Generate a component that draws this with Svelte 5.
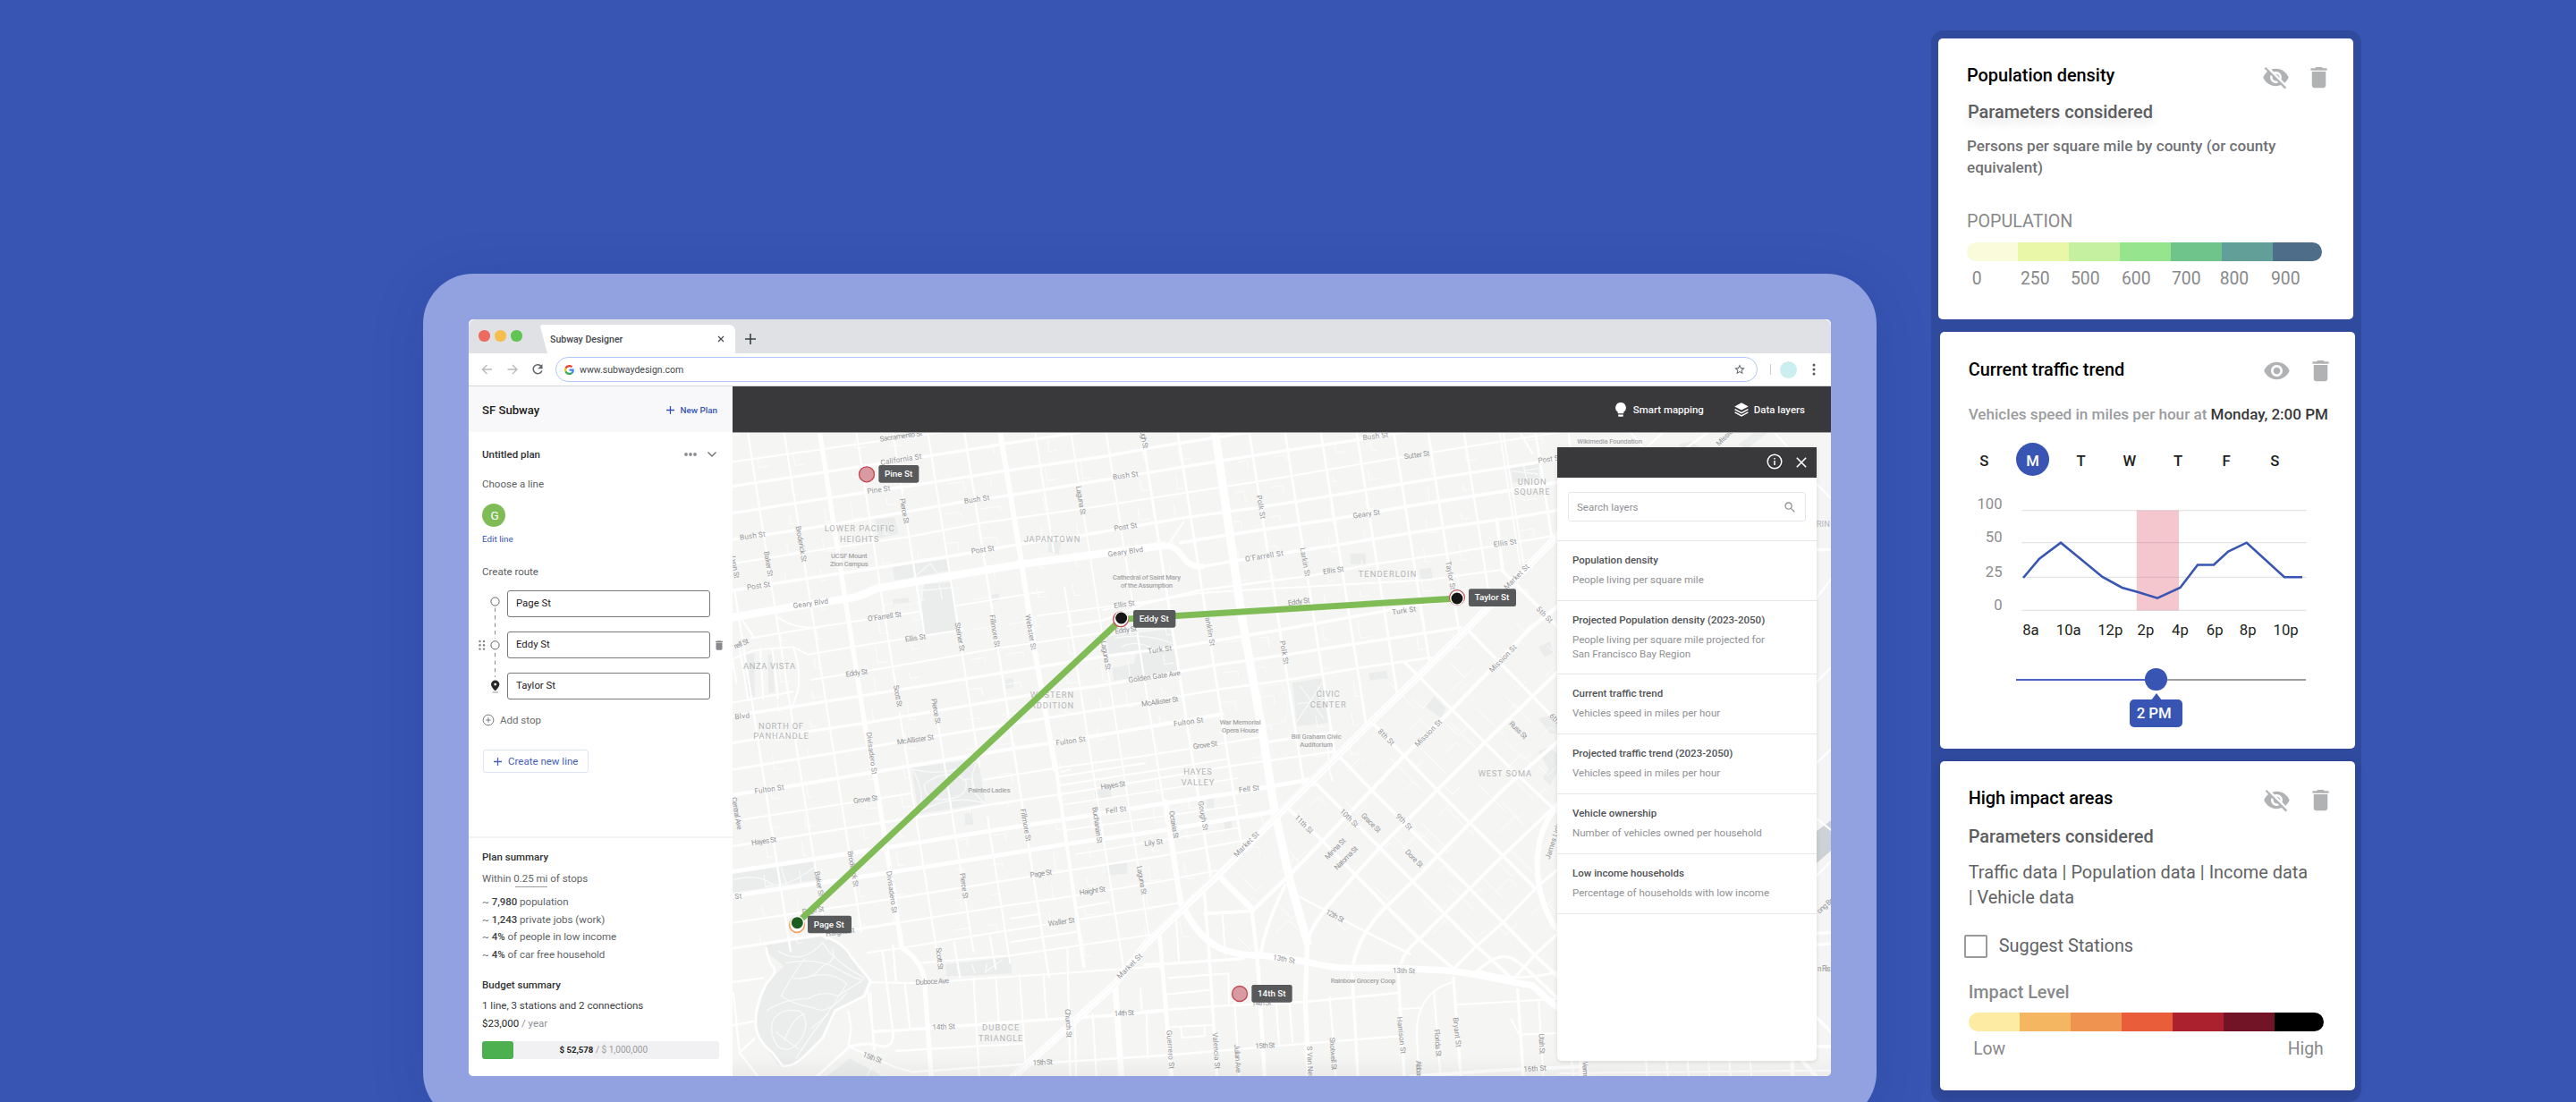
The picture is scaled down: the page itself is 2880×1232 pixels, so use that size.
<script>
  const stops = ['Page St', 'Eddy St', 'Taylor St'];

  const facts = [
    ['7,980', 'population'],
    ['1,243', 'private jobs (work)'],
    ['4%', 'of people in low income'],
    ['4%', 'of car free household'],
  ];

  const layers = [
    ['Population density', 'People living per square mile'],
    ['Projected Population density (2023-2050)', 'People living per square mile projected for San Francisco Bay Region'],
    ['Current traffic trend', 'Vehicles speed in miles per hour'],
    ['Projected traffic trend (2023-2050)', 'Vehicles speed in miles per hour'],
    ['Vehicle ownership', 'Number of vehicles owned per household'],
    ['Low income households', 'Percentage of households with low income'],
  ];

  const density = ['#fafbdb', '#e8f8a8', '#c4f09f', '#97e48e', '#6fc48b', '#629f98', '#4d6d88'];
  const densityLabels = ['0', '250', '500', '600', '700', '800', '900'];
  const impact = ['#feeba3', '#f4b661', '#ef9350', '#e95d3b', '#ab212d', '#731426', '#000000'];
  const days = ['S', 'M', 'T', 'W', 'T', 'F', 'S'];

  const yTicks = [['100', 563, 570.7], ['50', 600.3, 606.7], ['25', 639, 645.3], ['0', 676, 682.3]];
  const xTicks = [['8a', 2260.7], ['10a', 2298.3], ['12p', 2344.7], ['2p', 2389], ['4p', 2427.5], ['6p', 2466.3], ['8p', 2503.3], ['10p', 2541]];

  // Street network north-west of Market St: [stroke width, path]
  const grid = [
    [6, 'M-10 260L640 168L760 150'],
    [10, 'M-10 342L310 293L700 232L900 200L1160 160'],
    [10, 'M-10 432L320 380L620 335L925 287L1250 240L1440 205L1730 160'],
    [10, 'M-10 521L330 470L760 395L935 370L1270 315L1730 240L2080 187L2300 150'],
    [6, 'M-10 601L330 548L590 510L820 466L1180 415L1760 325L2230 245L2580 190L2820 152'],
    [10, 'M-10 692L130 668L480 615L760 570L960 535L1170 505L1520 445L1760 412L2020 370L2380 310L2820 242'],
    [26, 'M-10 782L200 745L400 715Q440 705 480 683L960 603L1440 540'],
    [11, 'M1500 530L1650 505L2020 450L2250 410L2600 355L2820 318'],
    [20, 'M1430 541C1520 530 1490 612 1570 610'],
    [10, 'M1570 610L1780 575L2010 540L2380 480L2620 445L2820 412'],
    [6, 'M60 850L240 820L400 795L630 760L640 835'],
    [6, 'M-10 925Q60 885 130 885L200 880L250 905L460 870L620 845L770 822'],
    [5, 'M745 742L1000 700L1040 695'],
    [6, 'M150 780Q200 820 290 815'],
    [6, 'M30 790L70 850'],
    [6, 'M260 990L540 945L880 885L1040 862L1240 832'],
    [7, 'M1120 810L1240 790L1380 735L1560 690L1940 640L2160 600L2410 565L2760 505'],
    [6, 'M1240 755L1560 700L1700 690L2330 655L2580 620'],
    [5, 'M1020 775L1440 720'],
    [10, 'M-10 1112L200 1080L420 1045L640 1010L880 970L1250 910L1490 880L1820 825L2180 760L2420 715'],
    [10, 'M-10 1202L440 1135L1000 1040L1230 1010L1620 940L1860 905L2080 870L2440 815'],
    [6, 'M-10 1068L200 1030'],
    [8, 'M-10 1292L340 1235L550 1200L980 1130L1380 1065L1640 1020L1860 990L2100 950L2340 915'],
    [12, 'M-10 1377L230 1340L600 1278L940 1220L1080 1200L1380 1150L1640 1105'],
    [6, 'M-10 1465L600 1370M840 1325L1090 1285L1380 1245L1660 1200L1780 1180'],
    [6, 'M1090 1315L1380 1270M1090 1345L1660 1255'],
    [9, 'M1780 1200L2020 1165'],
    [7, 'M-10 1549L490 1470L720 1435L850 1410L1090 1375L1440 1318L1660 1280L2020 1230'],
    [5, 'M1100 1410L1690 1320M1110 1495L1700 1410M1150 1575L1700 1485'],
    [14, 'M-10 1634L500 1555L870 1495L1100 1460L1440 1405L1680 1370L1930 1325'],
    [14, 'M-10 1716L300 1670L500 1640L880 1580L1120 1540L1440 1495L1810 1432'],
    [7, 'M-10 1806L420 1742L780 1685L1120 1630L1440 1580L1730 1525'],
    [9, 'M-10 1892L540 1807'],
    [6, 'M540 1807L900 1750L1140 1715L1440 1665L1640 1625'],
    [6, 'M450 1905L560 1890L800 1850L1150 1795L1500 1738'],
    [6, 'M620 1940L930 1915L1400 1845M930 1790L1030 1775M930 1870L1150 1835M1150 1755L1260 1735'],
  ];

  // North-south streets share one bearing: [x at the top edge, start y, end y, stroke width]
  const avenues = [
    [-78, 690, 1900, 7], [48, 150, 1860, 6], [170, 150, 1835, 6], [412, 150, 1010, 6], [412, 1100, 1950, 6],
    [535, 150, 780, 6], [535, 1080, 1900, 6], [652, 150, 1280, 6], [652, 1450, 1940, 6], [775, 150, 1990, 7],
    [1012, 150, 560, 6], [1030, 680, 1960, 6], [1132, 150, 1900, 5], [1250, 150, 1850, 6], [1370, 150, 1830, 9],
    [1490, 150, 1640, 8], [1730, 150, 1340, 8], [1850, 150, 1310, 8], [1970, 150, 1180, 8], [2090, 150, 1130, 8],
    [2215, 150, 960, 8], [2330, 150, 860, 8], [2450, 150, 700, 7], [2570, 150, 600, 5], [2582, 150, 600, 5], [2690, 150, 560, 8],
  ].map(([x, a, b, w]) => [w, `M${x + (a - 160) * 0.155} ${a}L${x + (b - 160) * 0.155} ${b}`]);

  const arterials = [
    [16, 'M288 150L375 720L450 1200L480 1340L565 1890Q625 1925 640 1990L664 2330'],
    [18, 'M893 150L965 590L1012 900L1080 1290'],
    [12, 'M1080 1270L1140 1700L1175 1950'],
    [28, 'M1614 150L1705 780L1775 1170L1815 1430L1868 1670L1925 1870'],
    [16, 'M1925 1850L1918 2070L1930 2330'],
    [18, 'M1450 1400L1500 1740'],
    [24, 'M2770 500L2460 820L2140 1130L1940 1330L1620 1650L1380 1880L1280 2010L930 2330'],
    [22, 'M1505 1745C1570 1880 1640 1915 1780 1915L1920 1935C2020 1962 2080 1958 2180 1955L2390 1965C2500 1975 2600 2005 2680 2015L2740 2070L2840 2140'],
    [10, 'M2490 1970C2570 1900 2600 1905 2660 1960L2820 2110'],
    [8, 'M2500 1965C2620 2010 2740 1980 2830 1950'],
    [18, 'M2770 1410C2680 1490 2670 1680 2750 1810L2820 1900'],
    [13, 'M2830 690L2670 820L2410 1090L2250 1245L2140 1360L1870 1640L1740 1765'],
    [12, 'M2830 900L2520 1200L2360 1360L2170 1550L2000 1740Q1930 1830 1925 1870'],
    [12, 'M2830 1140L2590 1350L2470 1470L2280 1665L2190 1750Q2100 1840 2080 1940'],
    [11, 'M2770 1400L2580 1580L2385 1775L2300 1860Q2250 1900 2240 1940'],
    [10, 'M2830 1570L2690 1690L2580 1805L2490 1885L2420 1955'],
    [10, 'M2830 1780L2690 1910L2620 1990'],
    [11, 'M2560 450L2580 625L2680 725L2830 880'],
    [11, 'M2460 820L2680 1045L2830 1200'],
    [10, 'M2250 930L2410 1090L2530 1210L2620 1300L2770 1440'],
    [11, 'M2140 1130L2250 1245L2360 1360L2470 1470L2580 1580L2690 1690'],
    [11, 'M2030 1245L2140 1360L2360 1580L2470 1690L2690 1915L2770 1990'],
    [11, 'M1950 1335L2170 1555L2385 1775L2495 1885L2630 2010'],
    [11, 'M1865 1425L1970 1525L2190 1750L2300 1860L2410 1955'],
    [7, 'M1895 1715L2120 1835L2270 1910'],
    [20, 'M1630 1650L1740 1760'],
    [11, 'M1580 1775L1740 1765'],
    [13, 'M1738 1760L1755 1900L1762 1990L1782 2330'],
    [11, 'M1850 1680Q1790 1800 1770 1900'],
    [10, 'M1380 1945L1460 1942L1710 1925'],
    [14, 'M1430 1850L1470 2330'],
    [10, 'M1580 1710L1597 1930L1622 2330'],
    [20, 'M1280 2010L1302 2330'],
    [6, 'M460 2005L640 2008L830 1992L1100 1975L1300 1960L1440 1950'],
    [10, 'M470 2170L640 2160L970 2135L1280 2115L1440 2100'],
    [8, 'M1380 2102L1610 2085L1920 2070L2230 2040'],
    [6, 'M2230 2095L2300 2090M2420 2080L2770 2060'],
    [7, 'M545 2235L970 2210M600 2305L970 2280L1440 2250L1920 2210L2230 2185'],
    [6, 'M1460 1990L1660 1975L1662 2080M1450 2045L1600 2030M1465 2155L1605 2148M1500 2155L1505 2190L1580 2185L1580 2150'],
    [11, 'M2270 2320L2560 2300L2830 2288'],
    [7, 'M535 1880L545 2000M500 1900L535 2170M450 2030L475 2230M575 2010L592 2160'],
    [6, 'M805 1990L825 2330M880 1985L890 2140M960 1980L980 2280M1040 1975L1050 2130M740 1870L760 1990M860 1850L880 1960'],
    [6, 'M1120 1890L1130 2330M1145 2130L1150 2330M1205 2110L1218 2330M1365 2025L1370 2100M1385 2110L1390 2260'],
    [6, 'M1680 2050L1697 2330M1820 2070L1830 2210M1865 2070L1875 2205M2000 2055L2022 2330M2350 2040L2372 2330M2700 2060L2718 2330M1485 1790L1495 1940M1640 1780L1650 1910'],
    [10, 'M2075 1975L2095 2330M2230 1975L2250 2330M2415 1990L2440 2330M2630 2030L2650 2330'],
    [6, 'M2410 2005Q2290 2040 2292 2180L2300 2330'],
    [6, 'M2610 2130L2635 2180L2760 2175'],
    [9, 'M280 2320L390 2220Q450 2205 480 2215Q540 2235 535 2170'],
    [6, 'M390 2222L545 2290L600 2305'],
    [7, 'M100 1990L-10 2005M0 2040L20 2240L90 2330M-10 2150L70 2135M20 2240L70 2195'],
    [8, 'M110 1890C120 1980 170 1940 110 2010Q70 2080 75 2150Q80 2200 130 2240L165 2285Q200 2290 240 2250L300 2190L340 2100L440 2050L460 2000L395 1920Q370 1870 300 1850'],
    [6, 'M385 2100L395 2160L385 2220M460 2040L470 2230'],
    [7, 'M3600 300L3690 390M3600 1030L3690 940M3600 760L3690 640M3600 1300L3690 1215M3600 1430L3690 1500M3600 1680L3690 1590'],
    [10, 'M3600 1840L3690 1838M3600 1880L3690 1875M3600 2090L3690 2180M3600 2220L3690 2220M3600 555L3690 553'],
    [6, 'M2640 165L2680 230M2800 150L2810 240M3040 230L3130 150M3170 230L3270 160M3490 160L3620 300M3000 150L3060 220'],
    [6, 'M2770 2310L3690 2300M2810 2260L2820 2330M2860 2260L2865 2330M3060 2265L3065 2330M3130 2265L3135 2330M3200 2265L3205 2330M3270 2265L3275 2330M3340 2265L3345 2330M3410 2265L3415 2330'],
    [14, 'M3550 2250L3552 2330M3570 2250L3640 2330M2840 2250L2845 2330'],
    [6, 'M20 880L50 1060M90 885L100 1055M130 885L150 1050M200 880Q230 960 215 1030L195 1090M-10 880L10 1000'],
    [5, 'M1450 550L1510 460'],
    [5, 'M1100 1300L1130 1290M1990 1170L2000 1300L2010 1330M1780 1350L1930 1325'],
  ];

  const parks = [
    'M110 1880L300 1850Q370 1870 395 1920L455 2000L430 2050L340 2100L300 2190L240 2250L200 2285L150 2280L90 2200L75 2130L110 2010L170 1950L120 1910Z',
    'M598 1285L820 1255L845 1405L620 1440Z',
    'M-10 1642L270 1600L285 1660L-10 1705Z',
    'M640 670L735 662L750 825L640 838L632 740Z',
    'M535 612L715 585L720 625L540 657Z',
    'M1250 845L1478 818L1490 965L1275 992L1270 950L1345 935L1350 895L1260 905Z',
    'M475 452L540 445L555 500L485 515Z',
    'M1058 520L1100 528L1090 570L1055 560Z',
    'M1875 1000L1975 985L1995 1135L1890 1145Z',
    'M710 1945L930 1920L935 1975L715 1985Z',
    'M300 2330L390 2260L520 2330Z',
    'M2605 275L2700 265L2710 310L2615 330Z',
    'M2320 1080L2350 1045L2390 1085L2375 1120Z',
    'M2700 880L2740 860L2750 900L2720 915Z',
    'M2700 1120L2760 1105L2765 1170L2740 1170Z',
    'M2700 1230L2735 1215L2765 1240L2762 1300L2740 1345L2715 1320L2735 1290Z',
    'M40 905L70 900L72 1045L50 1045ZM115 905L130 905L138 1030L118 1035Z',
    'M1250 1610L1320 1605L1322 1640L1255 1645Z',
    'M1210 1360L1265 1350L1268 1385L1212 1390Z',
    'M2130 968L2190 960L2195 985L2135 992ZM2067 568L2120 565L2122 600L2070 603Z',
    'M2300 620L2340 615L2345 650L2305 655Z',
    'M535 720L588 715L590 730L537 735ZM865 705L892 700L890 725L865 730Z',
    'M1585 1385L1610 1382L1612 1420L1588 1422ZM1645 1465L1670 1460L1672 1490L1648 1492Z',
    'M775 1440L800 1435L805 1475L778 1478ZM910 990L938 985L940 1015L915 1020Z',
    'M3170 200L3210 190L3240 210L3180 215ZM3370 200L3440 150L3470 160L3400 215Z',
  ];

  const trails = [
    'M150 1900Q230 1950 300 1870Q330 1930 440 1990',
    'M175 1940Q280 1920 350 1960T440 1995',
    'M240 1925Q210 1960 160 2050Q200 2080 270 2090Q310 2120 380 2040',
    'M240 1990Q330 1960 380 2010Q330 2090 300 2130Q260 2180 210 2260',
    'M130 2140Q150 2090 220 2100Q260 2130 230 2190Q190 2250 150 2220Q120 2180 130 2140Z',
    'M110 2100Q170 2060 250 2060Q300 2030 350 2050L430 2000',
    'M200 1990Q260 2000 300 1950Q350 1930 330 1890',
    'M170 2200Q200 2120 240 2110M140 2170L220 2230M260 2160L320 2110',
    'M600 1290Q720 1320 820 1260M600 1290Q650 1380 620 1435M820 1260Q770 1350 845 1405M620 1435Q730 1370 845 1405M640 1340Q720 1280 780 1330Q790 1380 720 1390Q640 1400 640 1340Z',
    'M0 1660Q80 1640 120 1670T270 1620M160 1620L180 1680',
    'M590 740L640 720M600 650L660 600L690 640M640 690L740 680M690 670L700 720',
    'M1280 850Q1380 830 1478 870M1300 880Q1360 850 1420 895',
    'M1900 1010L1980 1120M1975 1000L1890 1130M1890 1070L1985 1060',
    'M750 1950L760 1980M800 1945L810 1975M850 1940L845 1970L900 1930',
    'M1770 1010L1840 1005Q1870 1060 1850 1130L1785 1145Q1765 1080 1770 1010Z',
    'M2610 290L2700 300M2650 270L2660 320',
    'M440 2330L470 2280L500 2320',
  ];

  // Small service lanes scattered through the blocks
  const lanes = Array.from({ length: 300 }, (_, i) => {
    const x = (i * 617) % 2780;
    const y = 170 + ((i * 389) % 1700);
    const south = x + y > 3320;
    const l = 22 + ((i * 13) % 40);
    const k = 12 + ((i * 7) % 26);
    if (south) return `M${x} ${y}l${l} ${l * (i % 2 ? 1 : -1)}l${k} ${k * (i % 2 ? -1 : 1)}`;
    return i % 3 ? `M${x} ${y}l${l * 0.15} ${l}l${k} ${-k * 0.15}` : `M${x} ${y}l${l} ${-l * 0.15}l${k * 0.15} ${k}`;
  }).join('');

  const diagonals = Array.from({ length: 16 }, (_, i) => {
    const x = 2200 + ((i * 97) % 480);
    const y = 1000 + ((i * 211) % 800);
    return `M${x} ${y}l90 90`;
  }).join('');

  // [text, centre x, centre y, rotation, drawn length]
  const streets = [
    ['Sacramento St', 562, 172, -8, 144], ['California St', 562, 250, -9, 138], ['Pine St', 487, 352, -8, 78],
    ['Bush St', 64, 506, -8, 86], ['Bush St', 816, 384, -8, 86], ['Bush St', 1315, 304, -8, 86], ['Bush St', 2153, 172, -8, 86],
    ['Post St', 84, 674, -8, 78], ['Post St', 836, 553, -8, 78], ['Post St', 1315, 476, -8, 78], ['Post St', 2737, 249, -8, 78],
    ['Sutter St', 2292, 235, -8, 86], ['Geary St', 2123, 433, -8, 92], ['Geary Blvd', 259, 733, -8, 119], ['Geary Blvd', 1315, 560, -8, 119],
    ["O'Farrell St", 507, 777, -8, 114], ["O'Farrell St", 1780, 574, -9, 129], ['Ellis St', 610, 849, -8, 70], ['Ellis St', 1311, 736, -8, 70],
    ['Ellis St', 2012, 622, -8, 70], ['Ellis St', 2588, 530, -8, 78], ['Eddy St', 413, 966, -8, 74], ['Eddy St', 1316, 822, -8, 74],
    ['Eddy St', 1896, 727, -8, 74], ['Turk St', 2249, 757, -8, 81], ['Turk St', 1430, 888, -8, 81], ['Golden Gate Ave', 1412, 978, -8, 176],
    ['McAllister St', 1430, 1062, -8, 125], ['McAllister St', 610, 1190, -8, 125], ['rell St', 26, 868, -24, 52], ['Blvd', 29, 1111, -6, 50],
    ['Fulton St', 120, 1356, -8, 100], ['Fulton St', 1131, 1194, -8, 100], ['Fulton St', 1526, 1130, -8, 100], ['Grove St', 443, 1390, -8, 82],
    ['Grove St', 1582, 1208, -8, 82], ['Hayes St', 102, 1530, -8, 84], ['Hayes St', 1273, 1343, -8, 84], ['Fell St', 1283, 1426, -7, 70],
    ['Fell St', 1729, 1355, -7, 70], ['Lily St', 1409, 1535, -8, 62], ['Page St', 1031, 1639, -8, 74], ['Page St', 267, 1762, -8, 74],
    ['Haight St', 1204, 1697, -8, 88], ['Haight St', 358, 1835, -8, 98], ['Waller St', 1100, 1801, -8, 90], ['St', 16, 1715, -4, 24],
    ['Duboce Ave', 667, 2001, -3, 112], ['14th St', 705, 2153, -3, 76], ['14th St', 1310, 2107, -3, 66], ['14th St', 1771, 2073, -3, 66],
    ['15th St', 466, 2256, 20, 66], ['15th St', 1037, 2272, -3, 66], ['15th St', 1783, 2216, -3, 66], ['16th St', 2688, 2293, -3, 76],
    ['13th St', 1847, 1926, 10, 75], ['13th St', 2249, 1965, 1, 75], ['12th St', 2018, 1781, 28, 66],
    ['Market St', 2626, 644, -45, 108], ['Market St', 1720, 1541, -45, 108], ['Market St', 1328, 1950, -45, 108],
    ['Mission St', 2580, 918, -45, 118], ['Mission St', 2330, 1168, -45, 118], ['Minna St', 2018, 1556, -45, 88], ['Natoma St', 2054, 1587, -45, 100],
    ['5th St', 2721, 771, 45, 66], ['6th St', 2765, 1130, 45, 66], ['8th St', 2190, 1182, 45, 66], ['9th St', 2250, 1466, 45, 66], ['10th St', 2066, 1453, 45, 76],
    ['11th St', 1914, 1474, 45, 76], ['Grace St', 2139, 1469, 45, 82], ['Dore St', 2284, 1589, 45, 74], ['Russ St', 2633, 1158, 45, 74],
    ['Broderick St', 228, 534, 80, 122], ['Baker St', 118, 601, 80, 86], ['Lyon St', 6, 612, 80, 76], ['Pierce St', 574, 424, 80, 86],
    ['Pierce St', 680, 1095, 80, 86], ['Scott St', 552, 1044, 80, 74], ['Steiner St', 760, 846, 80, 98], ['Fillmore St', 877, 826, 80, 110],
    ['Webster St', 998, 830, 80, 120], ['Laguna St', 1166, 388, 80, 98], ['Laguna St', 1250, 908, 80, 98], ['Gough St', 1376, 172, 80, 86],
    ['Divisadero St', 464, 1236, 82, 142], ['Divisadero St', 532, 1702, 82, 142], ['Baker St', 288, 1674, 80, 86], ['Broderick St', 402, 1624, 80, 122],
    ['Pierce St', 774, 1681, 82, 86], ['Fillmore St', 981, 1477, 80, 110], ['Buchanan St', 1221, 1477, 82, 122], ['Laguna St', 1370, 1662, 80, 98],
    ['Central Ave', 12, 1438, 80, 110], ['Scott St', 692, 1925, 84, 74], ['Church St', 1124, 2142, 87, 96], ['Polk St', 1770, 410, 80, 80],
    ['Polk St', 1848, 898, 80, 80], ['Larkin St', 1918, 595, 80, 98], ['Taylor St', 2406, 640, 80, 96], ['Franklin St', 1597, 817, 80, 120],
    ['Octavia St', 1478, 1476, 80, 94], ['Gough St', 1576, 1446, 80, 100], ['Guerrero St', 1466, 2230, 86, 130], ['Valencia St', 1620, 2234, 86, 122],
    ['Julian Ave', 1692, 2260, 86, 96], ['S Van Ness', 1935, 2280, 88, 122], ['Shotwell St', 2012, 2244, 86, 110], ['Harrison St', 2241, 2182, 84, 124],
    ['Florida St', 2363, 2208, 86, 92], ['Bryant St', 2428, 2172, 84, 100], ['Alabama', 2300, 2306, 88, 76], ['Utah St', 2712, 2211, 88, 68],
    ['James Lick', 2748, 1532, -72, 122], ['Vermont', 2858, 2310, 88, 80], ['Mission', 3328, 172, -45, 80], ['ong Br', 3660, 1748, -42, 62], ['n Ris', 3658, 1960, 0, 44],
  ];

  const places = [
    ['UCSF Mount', 388, 574, 122], ['Zion Campus', 388, 601, 128], ['Cathedral of Saint Mary', 1386, 645, 228], ['of the Assumption', 1386, 673, 174],
    ['War Memorial', 1700, 1133, 138], ['Opera House', 1700, 1160, 124], ['Bill Graham Civic', 1955, 1180, 168], ['Auditorium', 1955, 1208, 110],
    ['Painted Ladies', 858, 1360, 142], ['Rainbow Grocery Coop', 2112, 2000, 218], ['Wikimedia Foundation', 2939, 190, 218],
  ];

  const districts = [
    ['LOWER PACIFIC', 422, 482, 234], ['HEIGHTS', 422, 517, 130], ['JAPANTOWN', 1068, 517, 188], ['ANZA VISTA', 120, 943, 174],
    ['NORTH OF', 159, 1144, 150], ['PANHANDLE', 159, 1179, 185], ['WESTERN', 1068, 1041, 145], ['ADDITION', 1068, 1076, 145],
    ['TENDERLOIN', 2193, 636, 194], ['UNION', 2678, 326, 96], ['SQUARE', 2678, 360, 120], ['CIVIC', 1994, 1037, 78], ['CENTER', 1994, 1073, 120],
    ['HAYES', 1557, 1299, 95], ['VALLEY', 1557, 1334, 110], ['WEST SOMA', 2587, 1305, 178], ['DUBOCE', 896, 2157, 124], ['TRIANGLE', 896, 2192, 148], ['RIN', 3655, 466, 46],
  ];

  const tags = [
    ['Pine St', 487, 270, 135], ['Eddy St', 1341, 756, 142], ['Taylor St', 2466, 685, 159],
    ['Page St', 249, 1781, 147], ['14th St', 1738, 2013, 136],
  ];
</script>

{#snippet trash()}
  <svg class="glyph" viewBox="0 0 24 24"><path d="M6 19c0 1.1.9 2 2 2h8c1.1 0 2-.9 2-2V7H6v12zM19 4h-3.500l-1-1h-5l-1 1H5v2h14V4z" /></svg>
{/snippet}
{#snippet eye()}
  <svg class="glyph" viewBox="0 0 24 24"><path d="M12 4.500C7 4.500 2.730 7.610 1 12c1.730 4.390 6 7.500 11 7.500s9.270-3.110 11-7.500c-1.730-4.390-6-7.500-11-7.500zM12 17c-2.760 0-5-2.240-5-5s2.240-5 5-5 5 2.240 5 5-2.240 5-5 5zm0-8c-1.660 0-3 1.340-3 3s1.340 3 3 3 3-1.340 3-3-1.340-3-3-3z" /></svg>
{/snippet}
{#snippet eyeOff()}
  <svg class="glyph" viewBox="0 0 24 24"><path d="M12 7c2.760 0 5 2.240 5 5 0 .65-.13 1.260-.36 1.830l2.920 2.920c1.510-1.260 2.700-2.890 3.430-4.750-1.730-4.390-6-7.500-11-7.500-1.400 0-2.740.25-3.980.7l2.160 2.160C10.740 7.130 11.350 7 12 7zM2 4.270l2.280 2.280.46.46C3.080 8.300 1.780 10.020 1 12c1.730 4.390 6 7.500 11 7.500 1.550 0 3.030-.3 4.380-.84l.42.42L19.730 22 21 20.730 3.270 3 2 4.270zM7.530 9.800l1.550 1.550c-.05.21-.08.43-.08.65 0 1.660 1.340 3 3 3 .22 0 .44-.03.65-.08l1.550 1.550c-.67.33-1.410.53-2.200.53-2.760 0-5-2.240-5-5 0-.79.2-1.530.53-2.200zm4.310-.78l3.150 3.150.02-.16c0-1.660-1.340-3-3-3l-.17.01z" /></svg>
{/snippet}
{#snippet plus()}
  <svg class="plus" viewBox="0 0 10 10"><path d="M5 0V10M0 5H10" /></svg>
{/snippet}

<main class="stage">
  <div class="tablet">
    <div class="browser">
      <div class="tabstrip">
        <div class="lights"><i class="red"></i><i class="amber"></i><i class="green"></i></div>
        <div class="tab">
          <svg class="tab-edge" viewBox="0 0 9 32"><path d="M9 0H3Q-1 0 .5 4L8 32H9Z" /></svg>
          <span>Subway Designer</span>
          <svg class="tab-close" viewBox="0 0 8 8"><path d="M1 1L7 7M7 1L1 7" /></svg>
        </div>
        <svg class="tab-new" viewBox="0 0 12 12"><path d="M6 0V12M0 6H12" /></svg>
      </div>
      <div class="toolbar">
        <svg class="nav" viewBox="0 0 72 14">
          <path class="dim" d="M12 7H1.500M6.500 2L1.500 7L6.500 12M29.500 7H40M35 2L40 7L35 12" />
          <path class="dark" d="M67.200 3.600A5 5 0 1 0 67.900 8.400" />
          <path class="head" d="M68.500 1V6.300H63.200Z" />
        </svg>
        <div class="url">
          <svg class="google" viewBox="0 0 48 48">
            <path fill="#EA4335" d="M24 9.500c3.540 0 6.710 1.220 9.210 3.600l6.850-6.850C35.900 2.380 30.470 0 24 0 14.620 0 6.510 5.380 2.560 13.220l7.980 6.190C12.430 13.720 17.740 9.500 24 9.500z" />
            <path fill="#4285F4" d="M46.980 24.550c0-1.570-.15-3.090-.38-4.550H24v9.020h12.940c-.58 2.960-2.260 5.480-4.780 7.180l7.730 6c4.510-4.180 7.090-10.360 7.090-17.650z" />
            <path fill="#FBBC05" d="M10.530 28.590c-.48-1.450-.76-2.990-.76-4.590s.27-3.140.76-4.590l-7.980-6.190C.92 16.460 0 20.120 0 24c0 3.880.92 7.540 2.560 10.780l7.970-6.190z" />
            <path fill="#34A853" d="M24 48c6.480 0 11.930-2.130 15.890-5.810l-7.730-6c-2.150 1.450-4.920 2.300-8.160 2.300-6.260 0-11.570-4.220-13.470-9.910l-7.980 6.190C6.510 42.620 14.620 48 24 48z" />
          </svg>
          <span>www.subwaydesign.com</span>
          <svg class="star" viewBox="0 0 24 24"><path d="M22 9.240l-7.190-.62L12 2 9.190 8.630 2 9.240l5.460 4.730L5.820 21 12 17.270 18.180 21l-1.630-7.030L22 9.240zM12 15.400l-3.760 2.270 1-4.280-3.320-2.880 4.380-.38L12 6.100l1.710 4.040 4.380.38-3.320 2.880 1 4.280L12 15.400z" /></svg>
        </div>
        <i class="sep"></i>
        <i class="avatar"></i>
        <svg class="kebab" viewBox="0 0 4 14"><circle cx="2" cy="2" r="1.500" /><circle cx="2" cy="7" r="1.500" /><circle cx="2" cy="12" r="1.500" /></svg>
      </div>

      <div class="app">
        <aside class="sidebar">
          <header class="side-head"><h1>SF Subway</h1><span class="new-plan">{@render plus()}New Plan</span></header>
          <section class="plan">
            <div class="plan-head">
              <strong>Untitled plan</strong>
              <svg viewBox="0 0 36 10"><circle cx="2" cy="5" r="1.900" /><circle cx="7" cy="5" r="1.900" /><circle cx="12" cy="5" r="1.900" /><path d="M26.500 2.500L31 7L35.500 2.500" /></svg>
            </div>
            <p class="choose">Choose a line</p>
            <span class="line-badge">G</span>
            <a class="edit" href="#edit">Edit line</a>
            <p class="create">Create route</p>
            <div class="route">
              <svg class="rail" viewBox="0 0 32 123">
                <path class="dash" d="M18.500 19.500V54M18.500 70V97" />
                <circle class="node" cx="18.500" cy="12.500" r="4.600" /><circle class="node" cx="18.500" cy="61.300" r="4.600" />
                <g class="grip"><circle cx="1.500" cy="57" r="1.200" /><circle cx="6" cy="57" r="1.200" /><circle cx="1.500" cy="61.300" r="1.200" /><circle cx="6" cy="61.300" r="1.200" /><circle cx="1.500" cy="65.600" r="1.200" /><circle cx="6" cy="65.600" r="1.200" /></g>
                <path class="pin" fill-rule="evenodd" d="M18.700 100.500a4.700 4.700 0 0 1 4.700 4.700c0 2.800-4.700 7.300-4.700 7.300s-4.700-4.500-4.700-7.300a4.700 4.700 0 0 1 4.700-4.700zm0 3.200a1.400 1.400 0 1 0 0 2.800a1.400 1.400 0 0 0 0-2.800z" />
                <path class="ground" d="M15.500 114H22" />
              </svg>
              <div class="inputs">
                {#each stops as stop, i}
                  <div class="stop"><span>{stop}</span>{#if i === 1}{@render trash()}{/if}</div>
                {/each}
              </div>
            </div>
            <div class="add"><svg viewBox="0 0 14 14"><circle cx="7" cy="7" r="5.900" /><path d="M7 4.200V9.800M4.200 7H9.800" /></svg>Add stop</div>
            <button class="new-line">{@render plus()}Create new line</button>
          </section>
          <section class="summary">
            <h2>Plan summary</h2>
            <p class="within">Within <u>0.25 mi</u> of stops</p>
            <ul>
              {#each facts as [n, label]}<li>~ <b>{n}</b> {label}</li>{/each}
            </ul>
            <h2 class="budget">Budget summary</h2>
            <p class="lines">1 line, 3 stations and 2 connections</p>
            <p class="cost">$23,000 <span>/ year</span></p>
            <div class="meter"><i></i><p><b>$ 52,578</b> / $ 1,000,000</p></div>
          </section>
        </aside>

        <div class="content">
          <header class="app-head">
            <span class="action">
              <svg class="bulb" viewBox="0 0 12 16"><path d="M6 0a5.800 5.800 0 0 1 3.300 10.600V12.300H2.700V10.600A5.800 5.800 0 0 1 6 0zM3.200 13.400H8.800V15A.8.8 0 0 1 8 15.800H4A.8.8 0 0 1 3.200 15Z" /></svg>Smart mapping
            </span>
            <span class="action">
              <svg class="stack" viewBox="0 0 16 16"><path d="M8 .3L15.700 4.400L8 8.500L.3 4.400Z" /><path class="edge" d="M.6 7.700L8 11.600L15.400 7.700M.6 10.900L8 14.800L15.400 10.900" /></svg>Data layers
            </span>
          </header>
          <div class="map">
            <svg class="streets" viewBox="-3 159 3684 2160">
              <defs>
                <clipPath id="north"><path d="M-20 100H3000V270L2460 820L1380 1880L1280 1990H-20Z" /></clipPath>
                <linearGradient id="foot" x1="0" y1="0" x2="0" y2="1"><stop offset="0" stop-color="#000" stop-opacity="0" /><stop offset="1" stop-color="#000" stop-opacity=".04" /></linearGradient>
              </defs>
              {#each parks as d}<path class="park" {d} />{/each}
              <path class="water" d="M3630 1500L3690 1455V1555L3630 1608Z" />
              <path class="lane" d={lanes} />
              <path class="lane" d={diagonals} />
              {#each trails as d}<path class="trail" {d} />{/each}
              <g clip-path="url(#north)">
                {#each [...grid, ...avenues] as [w, d]}<path class="road" stroke-width={w} {d} />{/each}
              </g>
              {#each arterials as [w, d]}<path class="road" stroke-width={w} {d} />{/each}
              <path class="rails" d="M2766 496L2456 816L2136 1126L1376 1876L1276 2006L926 2326M2774 504L2464 824L2144 1134L1384 1884L1284 2014L934 2334" />
              {#each streets as [t, x, y, a, w]}
                <text class="street" transform="translate({x} {y}) rotate({a})" y="9" textLength={w}>{t}</text>
              {/each}
              {#each places as [t, x, y, w]}<text class="place" {x} y={y + 8} textLength={w}>{t}</text>{/each}
              {#each districts as [t, x, y, w]}<text class="district" {x} y={y + 10} textLength={w}>{t}</text>{/each}
              <rect x="-3" y="2250" width="3684" height="70" fill="url(#foot)" />
              <path class="metro" d="M214 1805L1301 787L2427 717" />
              <circle class="halo amber-halo" cx="213" cy="1812" r="25" /><circle class="halo" cx="1299" cy="787" r="25" /><circle class="halo" cx="2427" cy="714" r="25" />
              <circle class="station origin" cx="214" cy="1805" r="21.500" /><circle class="station" cx="1301" cy="783" r="21.500" /><circle class="station" cx="2427" cy="717" r="21.500" />
              <circle class="candidate" cx="447" cy="301" r="25.500" /><circle class="candidate" cx="1698" cy="2043" r="25.500" />
              {#each tags as [t, x, y, w]}
                <rect class="tag-box" {x} {y} width={w} height="59" rx="7" /><text class="tag" x={x + 20} y={y + 39}>{t}</text>
              {/each}
            </svg>

            <aside class="panel">
              <header>
                <svg class="info" viewBox="0 0 18 18"><circle cx="9" cy="9" r="7.800" /><path d="M9 8V13M9 5V6.600" /></svg>
                <svg class="close" viewBox="0 0 12 12"><path d="M.8.8L11.200 11.200M11.200.8L.8 11.200" /></svg>
              </header>
              <div class="search">
                <span>Search layers</span>
                <svg viewBox="0 0 12 12"><circle cx="4.600" cy="4.600" r="3.600" /><path d="M7.400 7.400L11.200 11.200" /></svg>
              </div>
              {#each layers as [title, text]}
                <article><h3>{title}</h3><p>{text}</p></article>
              {/each}
            </aside>
          </div>
        </div>
      </div>
    </div>
  </div>

  <div class="cards">
    <section class="card density">
      <header><h2>Population density</h2>{@render eyeOff()}{@render trash()}</header>
      <h3 class="lifted">Parameters considered</h3>
      <p class="note">Persons per square mile by county (or county equivalent)</p>
      <p class="caps">POPULATION</p>
      <div class="scale">{#each density as c}<i style:background={c}></i>{/each}</div>
      <div class="steps">{#each densityLabels as l}<span>{l}</span>{/each}</div>
    </section>

    <section class="card traffic">
      <header><h2>Current traffic trend</h2>{@render eye()}{@render trash()}</header>
      <p class="when">Vehicles speed in miles per hour at <b>Monday, 2:00 PM</b></p>
      <div class="days">{#each days as d, i}<span class:on={i === 1}>{d}</span>{/each}</div>
      <svg class="chart" viewBox="2200.500 545 400 175">
        {#each yTicks as [t, ty, ly]}
          <text class="ytick" x="2238" y={ty + 6}>{t}</text>
          <path class="rule" d="M2260 {ly}H2578.300" />
        {/each}
        <rect class="band" x="2388.300" y="570.700" width="47.300" height="111.600" />
        <polyline class="trend" points="2261.500,646 2279.500,624.700 2303.500,606.700 2327,626 2350,645 2372,657 2390,662 2411.500,668.700 2437,657 2456.500,631.500 2474.500,631.500 2490.700,616.500 2511.300,606.700 2553.500,645.300 2573.500,645.300" />
        {#each xTicks as [t, x]}<text class="xtick" {x} y="709.500">{t}</text>{/each}
      </svg>
      <div class="slider"><i class="past"></i><i class="rest"></i><i class="knob"></i><span class="bubble">2 PM</span></div>
    </section>

    <section class="card impact">
      <header><h2>High impact areas</h2>{@render eyeOff()}{@render trash()}</header>
      <h3>Parameters considered</h3>
      <p class="sources">Traffic data | Population data | Income data | Vehicle data</p>
      <div class="suggest"><i></i>Suggest Stations</div>
      <p class="level">Impact Level</p>
      <div class="scale">{#each impact as c}<i style:background={c}></i>{/each}</div>
      <div class="ends"><span>Low</span><span>High</span></div>
    </section>
  </div>
</main>

<style>
  :global(body) { margin: 0; background: #3855b3; }
  .stage, .stage :global(*) { box-sizing: border-box; }
  .stage {
    width: 2880px; height: 1232px; overflow: hidden; background: #3855b3;
    padding-left: 473px; display: flex; align-items: flex-start;
    font-family: Roboto, sans-serif; font-size: 11.530px; color: #3c4043;
  }
  h1, h2, h3, p, ul { margin: 0; padding: 0; font-weight: 400; }
  h1, h2, h3, strong, b { font-weight: 500; }
  svg { display: block; flex: none; fill: none; }
  i { display: block; flex: none; }

  .tablet { flex: none; width: 1625px; height: 949px; margin-top: 306px; padding: 51px; border-radius: 56px; background: #92a1e0; box-shadow: 0 8px 60px rgba(20, 40, 120, .16); }
  .browser { width: 1523px; height: 846px; border-radius: 5px; overflow: hidden; background: #fff; display: flex; flex-direction: column; }

  .tabstrip { height: 38px; flex: none; background: #dfe1e5; border-radius: 8px 8px 0 0; display: flex; align-items: flex-end; }
  .lights { display: flex; gap: 5.500px; padding-left: 11px; width: 80px; height: 26px; }
  .lights i { width: 12.500px; height: 12.500px; border-radius: 50%; }
  .red { background: #ed6a5e; }
  .amber { background: #f5be4f; }
  .green { background: #61c454; }
  .tab { width: 218px; height: 32px; display: flex; align-items: center; padding-right: 12px; font-size: 10.550px; font-weight: 500; color: #45494d; background: linear-gradient(#fff, #fff) 8px 0 no-repeat; border-top-right-radius: 7px; }
  .tab span { flex: 1; margin-left: 2px; }
  .tab-edge { width: 9px; height: 32px; fill: #fff; }
  .tab-close { width: 8px; height: 8px; stroke: #45494d; stroke-width: 1.200; }
  .tab-new { width: 12px; height: 12px; margin: 0 0 10px 11px; stroke: #3c4043; stroke-width: 1.600; }

  .toolbar { height: 37px; flex: none; border-bottom: 1px solid #d5d7da; display: flex; align-items: center; padding: 0 17px 0 14px; }
  .nav { width: 72px; height: 14px; margin-right: 10.500px; }
  .dim { stroke: #b9bbbe; stroke-width: 1.400; }
  .dark { stroke: #5f6368; stroke-width: 1.500; }
  .head { fill: #5f6368; }
  .url { width: 1344px; height: 28px; border: 1.500px solid #aec7f7; border-radius: 14px; display: flex; align-items: center; padding: 0 12px 0 9px; font-size: 10.530px; color: #45494d; }
  .google { width: 11px; height: 11px; margin-right: 6.500px; }
  .url span { flex: 1; }
  .star { width: 14px; height: 14px; fill: #5f6368; }
  .sep { width: 1px; height: 12px; background: #c9ccd0; margin-left: 14.500px; }
  .avatar { width: 19px; height: 19px; border-radius: 50%; background: #cbeff0; margin-left: 10px; }
  .kebab { width: 4px; height: 14px; fill: #55585c; margin-left: auto; }

  .app { flex: 1; display: flex; min-height: 0; }
  .sidebar { width: 295px; flex: none; display: flex; flex-direction: column; background: #fff; }
  .side-head { height: 51px; background: #f8f8fb; display: flex; align-items: center; justify-content: space-between; padding: 1px 17px 0 15px; }
  h1 { font-size: 13.140px; color: #1d1e20; }
  .new-plan { display: flex; align-items: center; gap: 6.500px; font-size: 9.820px; font-weight: 500; color: #3855b3; }
  .plus { width: 9px; height: 9px; stroke: currentColor; stroke-width: 1.400; }
  .plan { padding: 15px 0 0 15px; display: flex; flex-direction: column; align-items: flex-start; }
  .plan-head { width: 262px; height: 20px; display: flex; align-items: center; justify-content: space-between; }
  .plan-head strong { color: #2f3133; }
  .plan-head svg { width: 36px; height: 10px; }
  .plan-head circle { fill: #8b8d90; }
  .plan-head path { stroke: #77797c; stroke-width: 1.500; }
  .choose, .create { line-height: 16px; margin-top: 15px; color: #5c5f62; }
  .line-badge { width: 26px; height: 26px; margin-top: 14px; border-radius: 50%; background: #80bc56; color: #fff; font-size: 13.500px; line-height: 27px; text-align: center; padding-left: 2px; }
  .edit { font-size: 9.890px; line-height: 14px; margin-top: 7px; color: #3855b3; text-decoration: none; }
  .create { margin-top: 21px; }
  .route { display: flex; margin-top: 13px; margin-left: -4px; }
  .rail { width: 32px; height: 123px; }
  .dash { stroke: #8c8c8c; stroke-dasharray: 4.500 4; }
  .node { stroke: #5f6063; stroke-width: 1; }
  .grip { fill: #808285; }
  .pin { fill: #27282a; }
  .ground { stroke: #9a9a9a; }
  .inputs { display: flex; flex-direction: column; gap: 16.200px; }
  .stop { display: flex; align-items: center; height: 30px; gap: 3px; }
  .stop span { width: 227px; height: 30px; border: 1px solid #77787b; border-radius: 3px; line-height: 27px; padding-left: 9px; color: #1f2022; font-size: 11.370px; }
  .stop :global(.glyph) { width: 14px; height: 15px; fill: #88898c; }
  .add { display: flex; align-items: center; gap: 6px; height: 16px; margin-top: 14px; color: #6a6c6f; }
  .add svg { width: 14px; height: 14px; stroke: #6a6c6f; stroke-width: .9; }
  .new-line { margin: 25px 0 0 1px; width: 118px; height: 26px; padding: 0 0 0 11px; border: 1px solid #dfe4f4; border-radius: 3px; background: #fff; display: flex; align-items: center; gap: 7px; font: 400 11.530px Roboto, sans-serif; color: #4661b9; }

  .summary { margin-top: auto; height: 268px; border-top: 2px solid #f2f3f4; padding: 12.500px 15px 0; }
  .summary h2 { line-height: 16px; font-size: 11.500px; color: #2f3133; }
  .within { line-height: 16px; margin-top: 8px; color: #606366; }
  .within u { position: relative; text-decoration: none; }
  .within u::after { content: ''; position: absolute; left: 2px; right: 0; bottom: -3px; height: 1px; background: #9b9da0; }
  ul { list-style: none; margin-top: 9.400px; }
  li { line-height: 19.800px; color: #606366; }
  li b { color: #3c4043; font-size: 11.450px; }
  .summary .budget { margin-top: 15.200px; }
  .lines { line-height: 19.800px; margin-top: 6px; color: #3c4043; }
  .cost { line-height: 19.800px; color: #1d1e20; }
  .cost span { color: #909295; }
  .meter { height: 20px; margin-top: 9px; border-radius: 3px; background: #f1f1f3; display: flex; }
  .meter i { width: 35px; height: 20px; border-radius: 3px; background: #4caf50; }
  .meter p { margin-left: 51.500px; line-height: 19px; font-size: 10.050px; color: #9a9b9e; }
  .meter b { font-size: 9.650px; font-weight: 700; color: #1d1e20; }

  .content { flex: 1; display: flex; flex-direction: column; }
  .app-head { height: 51px; flex: none; background: #39393b; display: flex; justify-content: flex-end; align-items: center; gap: 34.500px; padding: 1px 29px 0 0; color: #f5f5f7; font-weight: 500; font-size: 11.480px; }
  .action { display: flex; align-items: center; gap: 6.500px; }
  .action svg { fill: #fff; }
  .bulb { width: 12px; height: 16px; margin-right: 1px; }
  .stack { width: 16px; height: 16px; margin-right: -1px; }
  .action .edge { fill: none; stroke: #fff; stroke-width: 1.500; }

  .map { flex: 1; position: relative; background: #f5f5f4; }
  .map::before { content: ''; position: absolute; inset: 0 0 auto; height: 1px; background: #a3a3a3; }
  .streets { width: 1228px; height: 720px; }
  .park { fill: #ebedec; }
  .water { fill: #cdd3d4; }
  .road { stroke: #fff; stroke-linecap: round; stroke-linejoin: round; }
  .lane { stroke: #fff; stroke-width: 3; opacity: .75; }
  .trail { stroke: #f8f9f8; stroke-width: 4; }
  .rails { stroke: #ededed; stroke-width: 1.500; }
  text { font-family: Roboto, sans-serif; }
  .street { font-size: 24.500px; fill: #949597; text-anchor: middle; }
  .place { font-size: 23px; font-weight: 500; fill: #a5a5a6; text-anchor: middle; }
  .district { font-size: 28px; fill: #b4b5b6; text-anchor: middle; }
  .metro { stroke: #80bc56; stroke-width: 21; }
  .halo { fill: #fff; stroke: #c04953; stroke-width: 4; }
  .amber-halo { stroke: #f0a568; stroke-width: 5; }
  .station { fill: #161617; stroke: #fff; stroke-width: 4; }
  .origin { fill: #1c5d1f; }
  .candidate { fill: #d99ba1; stroke: #c04953; stroke-width: 4; }
  .tag-box { fill: #58595b; }
  .tag { font-size: 29.500px; font-weight: 500; fill: #fff; }

  .panel { position: absolute; left: 922px; top: 17px; width: 289.500px; height: 686px; background: #fff; border-radius: 0 0 5px 5px; box-shadow: 0 1px 5px rgba(0, 0, 0, .12); }
  .panel header { height: 34px; background: #39393b; display: flex; align-items: center; justify-content: flex-end; gap: 15px; padding-right: 10.500px; }
  .info { width: 18px; height: 18px; margin-top: -2px; stroke: #fff; stroke-width: 1.500; }
  .close { width: 12px; height: 12px; stroke: #fff; stroke-width: 1.600; }
  .search { margin: 16px 12px 21px; height: 33px; border: 1px solid #e7e7e9; border-radius: 3px; display: flex; align-items: center; justify-content: space-between; padding: 0 11px 0 9px; color: #8f9194; }
  .search svg { width: 12px; height: 12px; stroke: #8f9194; stroke-width: 1.300; }
  article { border-top: 1px solid #e5e6e8; height: 67px; padding: 13px 0 0 17px; }
  article:nth-of-type(2) { height: 82px; }
  article:last-of-type { height: 68px; border-bottom: 1px solid #e5e6e8; }
  article h3 { font-size: 11.530px; line-height: 17px; color: #505255; }
  article p { width: 226px; line-height: 16px; margin-top: 5px; color: #8f9194; }

  .cards { flex: none; width: 481px; height: 1198px; margin: 34px 0 0 60.500px; padding: 8.500px 0 0 8.500px; border-radius: 14px; background: #304a9d; display: flex; flex-direction: column; }
  .card { width: 464px; flex: none; background: #fff; border-radius: 5px; padding: 28px 0 0 32px; font-size: 19.900px; color: #616264; }
  .card header { height: 28px; display: flex; align-items: center; padding-right: 23px; }
  .card h2 { flex: 1; font-size: 19.870px; color: #000; line-height: 28px; padding-top: 1px; }
  .card header :global(.glyph) { width: 31px; height: 31px; fill: #b1b2b4; margin: 3px 0 0 17.500px; }
  .card h3 { font-size: 19.910px; line-height: 24px; color: #5c5d5f; }
  .density { height: 314px; }
  .density .lifted { margin: 15px 0 0 1px; text-shadow: 0 6px 12px rgba(0, 0, 0, .14); }
  .note { width: 380px; margin-top: 13.500px; font-weight: 500; font-size: 17.100px; line-height: 24px; color: #707173; }
  .caps { margin-top: 36.600px; font-size: 19.730px; line-height: 24px; color: #88898b; }
  .scale { width: 397px; height: 21.500px; margin-top: 11px; border-radius: 11px; overflow: hidden; display: flex; }
  .scale i { width: 57px; height: 22px; }
  .steps { margin-top: 7.600px; padding-left: 5.700px; line-height: 24px; font-size: 19.300px; color: #88898b; display: grid; grid-template-columns: 54.300px 56px 57px 56px 53.700px 57.300px 50px; }
  .traffic { height: 465.500px; margin: 14.500px 0 0 1.700px; }
  .when { margin-top: 24.300px; font-size: 17.100px; font-weight: 500; line-height: 24px; color: #9b9c9e; white-space: nowrap; }
  .when b { color: #37383a; font-size: 17px; }
  .days { display: grid; grid-template-columns: repeat(7, 54.200px); justify-items: center; margin: 19.700px 0 0 -9.500px; height: 38px; font-size: 16.700px; font-weight: 500; color: #1d1e20; line-height: 41px; }
  .days span { width: 37.500px; height: 37.500px; text-align: center; }
  .days .on { background: #3855b3; color: #fff; border-radius: 50%; }
  .chart { width: 400px; height: 175px; margin-top: 12px; }
  .ytick { font-size: 16.610px; fill: #8b8c8e; text-anchor: end; }
  .xtick { font-size: 16.700px; fill: #1d1e20; }
  .rule { stroke: #e3e4e5; stroke-width: 1.200; }
  .band { fill: #e05c73; opacity: .35; }
  .trend { stroke: #3855b3; stroke-width: 2.600; }
  .slider { position: relative; margin: 27.500px 0 0 53.500px; width: 324px; height: 25px; display: flex; align-items: center; }
  .past { width: 156px; height: 1.500px; background: #4a66bf; }
  .rest { width: 168px; height: 1.500px; background: #9c9d9e; }
  .knob { position: absolute; left: 144px; top: 0; width: 24.500px; height: 24.500px; border-radius: 50%; background: #3855b3; }
  .bubble { position: absolute; left: 127px; top: 35px; width: 58.500px; height: 31px; border-radius: 5px; background: #3855b3; color: #fff; font-size: 16.740px; font-weight: 500; line-height: 30px; padding-left: 7.500px; }
  .bubble::before { content: ''; position: absolute; left: 24px; top: -7px; border: 6px solid transparent; border-top: 0; border-bottom: 8px solid #3855b3; }
  .impact { height: 368.500px; margin: 14px 0 0 1.700px; box-shadow: 0 4px 12px rgba(20, 30, 80, .2); }
  .impact h3 { margin-top: 17.700px; }
  .sources { width: 385px; margin-top: 14.200px; line-height: 28px; }
  .suggest { display: flex; align-items: center; gap: 13px; height: 26px; margin: 26.600px 0 0 -5px; }
  .suggest i { width: 26px; height: 26px; border: 2.500px solid #999a9c; border-radius: 2px; }
  .level { margin-top: 26.600px; line-height: 24px; font-size: 19.800px; color: #88898b; font-weight: 500; }
  .impact .scale { margin-top: 10.400px; }
  .ends { display: flex; justify-content: space-between; width: 397px; padding-left: 5.500px; margin-top: 7.800px; line-height: 24px; font-size: 19.330px; color: #88898b; }
</style>
